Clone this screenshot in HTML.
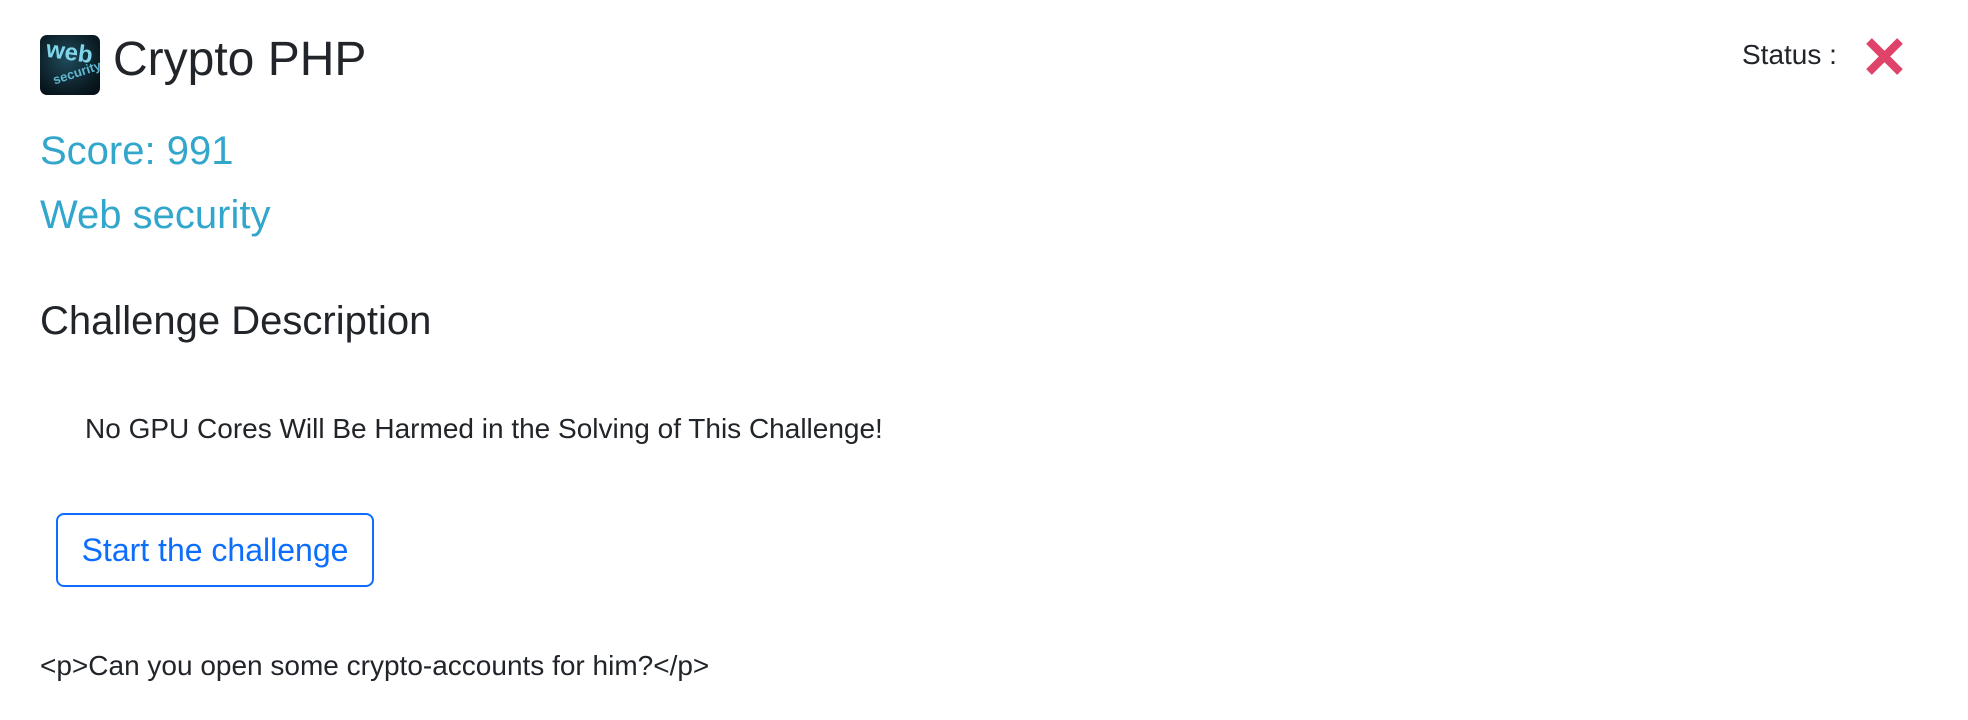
<!DOCTYPE html>
<html><head><meta charset="utf-8"><style>
html,body{margin:0;padding:0;width:1968px;height:720px;background:#fff;overflow:hidden}
body{font-family:"Liberation Sans",Arial,sans-serif;color:#212529;position:relative}
.a{position:absolute;white-space:nowrap}
</style></head><body>
<div class="a" style="left:40px;top:35px;width:60px;height:60px;border-radius:7px;background:radial-gradient(circle at 45% 40%,#1f4a5a,#0a1a22 70%,#050b10);overflow:hidden">
 <div style="position:absolute;left:6px;top:4px;font:bold 24px 'Liberation Sans',sans-serif;color:#7fd6e8;transform:rotate(8deg)">web</div>
 <div style="position:absolute;left:12px;top:30px;font:bold 13px 'Liberation Sans',sans-serif;color:#5fb8d0;transform:rotate(-18deg)">security</div>
</div>
<div class="a" style="left:113px;top:36px;font-size:48px;line-height:48px">Crypto PHP</div>
<div class="a" style="left:1742px;top:40px;font-size:28px;line-height:30px">Status :</div>
<svg class="a" style="left:1865px;top:37px" width="39" height="39" viewBox="0 0 39 39"><path d="M4 4L35 35M35 4L4 35" stroke="#e0436a" stroke-width="8"/></svg>
<div class="a" style="left:40px;top:131px;font-size:40px;line-height:40px;color:#33a6cc">Score: 991</div>
<div class="a" style="left:40px;top:195px;font-size:40px;line-height:40px;color:#33a6cc">Web security</div>
<div class="a" style="left:40px;top:301px;font-size:40px;line-height:40px">Challenge Description</div>
<div class="a" style="left:85px;top:414px;font-size:28px;line-height:30px">No GPU Cores Will Be Harmed in the Solving of This Challenge!</div>
<div class="a" style="left:56px;top:513px;width:314px;height:70px;border:2px solid #0d6efd;border-radius:8px;color:#0d6efd;font-size:32px;line-height:70px;text-align:center">Start the challenge</div>
<div class="a" style="left:40px;top:651px;font-size:28px;line-height:30px">&lt;p&gt;Can you open some crypto-accounts for him?&lt;/p&gt;</div>
</body></html>
